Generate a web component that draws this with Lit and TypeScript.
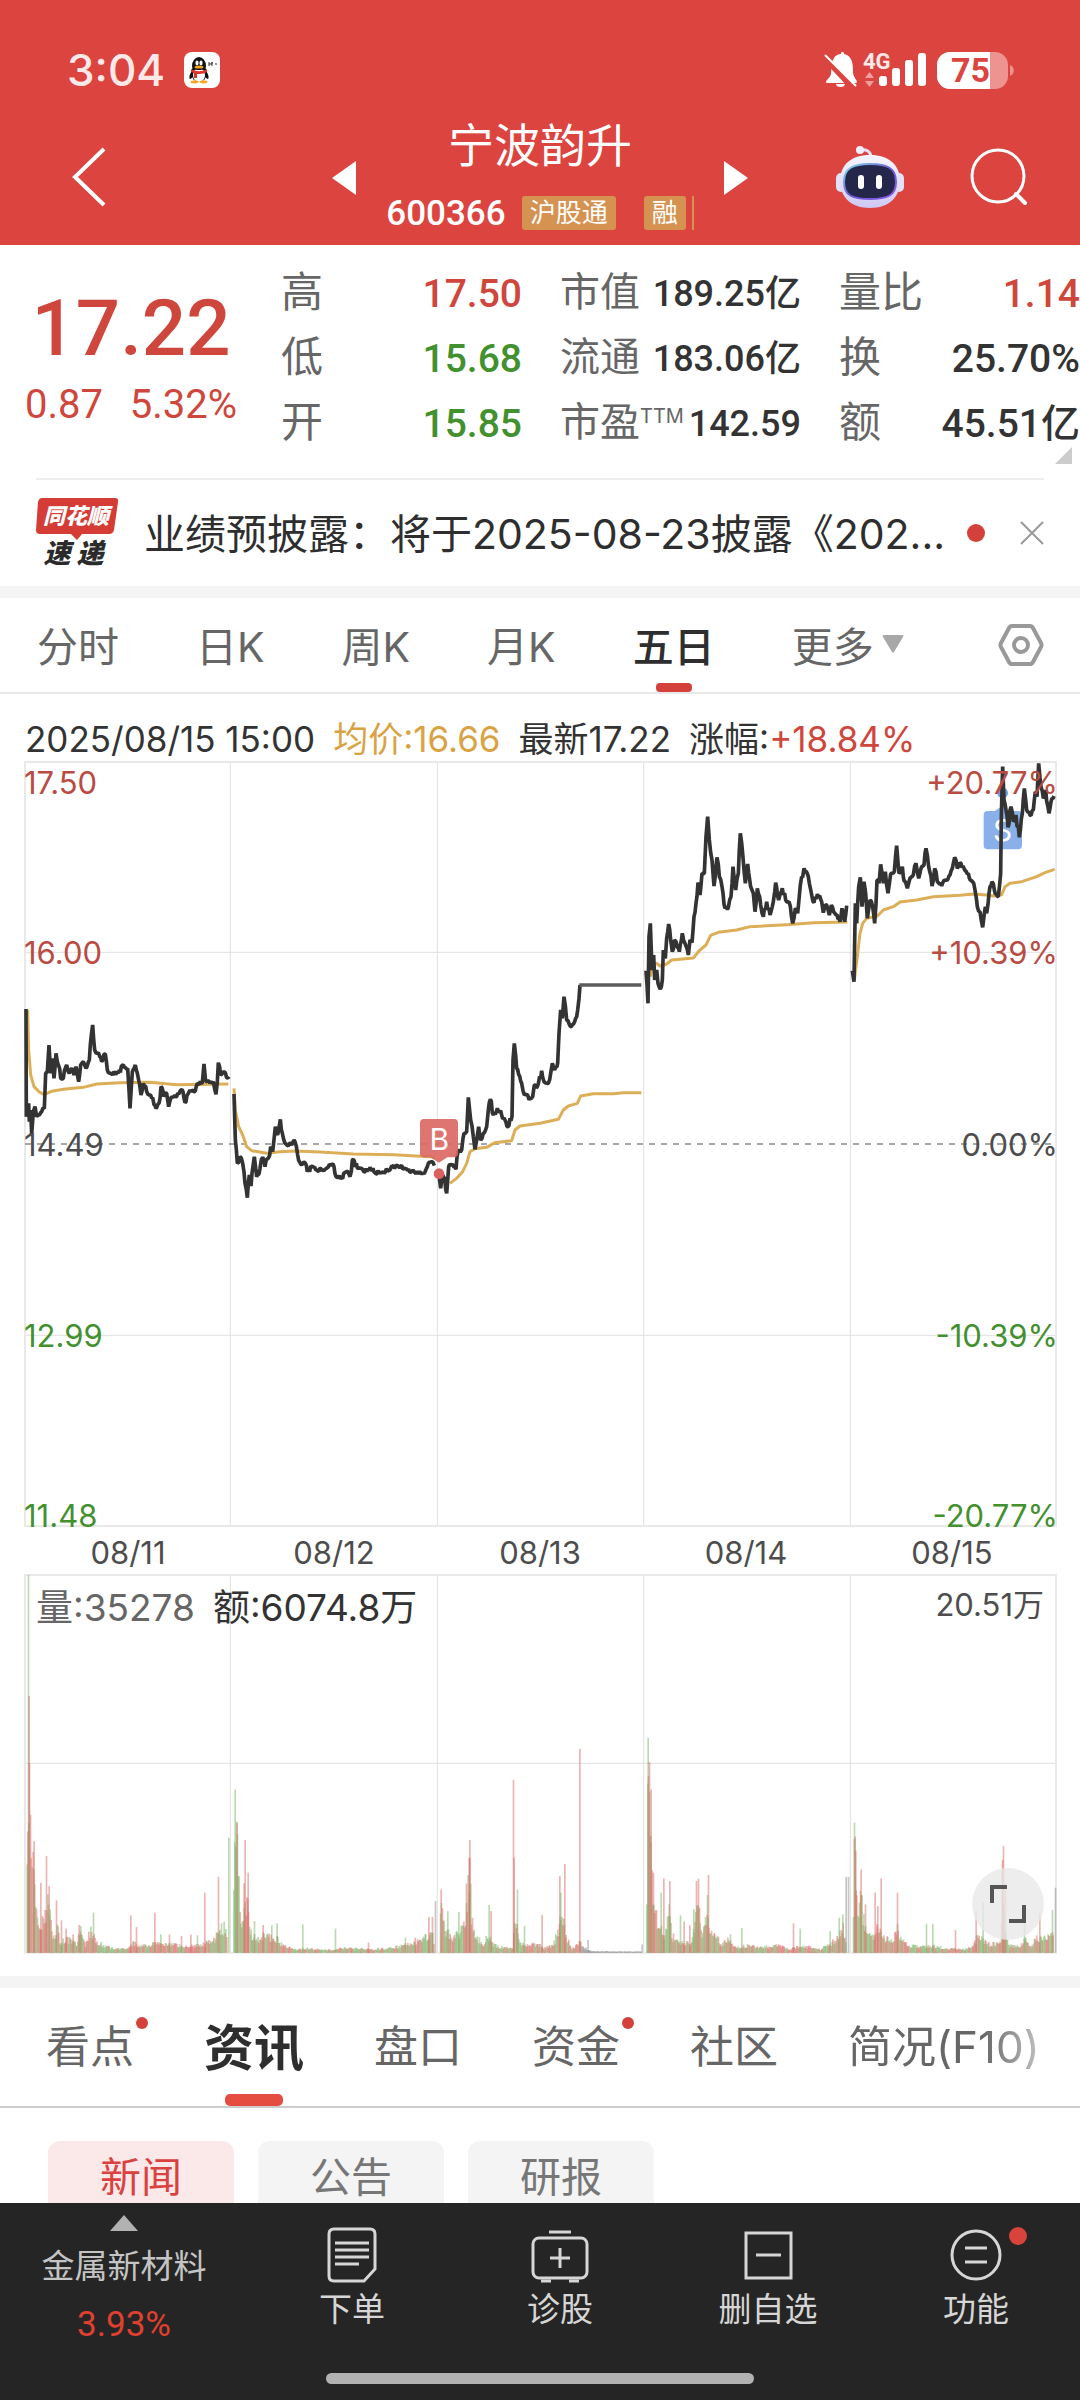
import { LitElement, html, svg, css } from "lit";
import { customElement, state } from "lit/decorators.js";

type Point = [number, number];

const pairs = (text: string, dx = 0): Point[] =>
  text
    .trim()
    .split(/\s+/)
    .map((item) => {
      const [x, y] = item.split(",").map(Number);
      return [x + dx, y] as Point;
    });

/* Deterministic generator, so that the fill between samples is the same on every draw. */
const noise = (seed: number) => {
  let value = seed;
  return () => {
    value = (value * 1664525 + 1013904223) % 4294967296;
    return value / 4294967296;
  };
};

const PRICE: Point[][] = [
  pairs(`78,777 79,1100 86,1060 88,1115 92,1080 95,1152 100,1085 105,1070 110,1100 118,1095 125,1085 133,1075 137,970
    142,965 147,885 152,970 157,925 162,985 168,910 175,945 182,985 190,985 200,945 208,970 215,955 222,975 228,950
    236,995 242,945 250,935 258,955 268,930 274,855 278,825 284,900 292,910 305,935 316,912 322,960 335,970 355,970
    370,945 383,955 390,1075 397,965 406,945 415,985 423,1035 430,1000 440,1025 448,1035 455,1045 468,1075 477,1060
    483,1010 492,1040 500,1030 506,1070 515,1040 530,1040 543,1020 558,1055 570,1020 582,1025 592,1000 607,998
    612,942 617,995 640,995 648,1033 655,938 662,975 672,965 680,983 687,980`),
  pairs(`702,1032 706,1170 712,1240 720,1220 728,1240 735,1300 742,1343 748,1275 753,1308 763,1220 770,1280 780,1255
    788,1222 795,1250 805,1225 812,1190 818,1205 826,1130 833,1155 841,1108 847,1150 855,1180 865,1188 885,1175
    893,1215 905,1245 915,1238 922,1265 935,1250 950,1260 975,1258 988,1243 1002,1250 1008,1280 1025,1283 1040,1265
    1050,1280 1057,1230 1075,1255 1095,1265 1110,1252 1125,1268 1150,1265 1172,1255 1190,1247 1220,1257 1245,1268
    1272,1272 1285,1240 1295,1235 1303,1247`),
  pairs(`1317,1275 1322,1315 1328,1275 1334,1285 1340,1330 1346,1250 1355,1245 1368,1258 1374,1205 1385,1200 1392,1150
    1400,1145 1405,1042 1412,1110 1420,1160 1425,1198 1436,1130 1442,1170 1450,1150 1460,1130 1465,1080 1471,1048
    1480,1095 1492,1075 1505,1095 1515,1110 1524,1130 1536,1100 1539,930 1543,880 1550,955 1565,1000 1573,1035
    1590,1045 1598,1040 1603,1005 1612,1010 1625,962 1635,998 1645,1000 1652,970 1657,940 1664,960 1673,940
    1677,850 1682,780 1687,805 1692,740 1700,810 1714,830 1724,815 1733,780 1740,705`),
  pairs(
    `18,662 24,760 27,560 31,520 36,660 41,615 44,690 50,660 54,700 61,717 67,690 70,600 76,625 80,565 86,522 92,570
    97,605 103,570 108,575 118,605 127,550 135,580 145,615 150,570 156,578 162,500 168,460 174,398 180,435 186,370
    193,370 198,260 203,200 208,270 216,330 222,408 231,322 238,380 246,410 255,475 265,472 273,440 279,350 287,420
    295,370 301,250 308,310 316,400 323,342 332,410 340,430 345,485 352,415 362,465 370,500 380,455 390,495 400,455
    407,398 416,450 427,415 437,450 447,455 458,520 466,475 473,490 481,405 492,355 505,380 515,435 522,458 532,432
    545,455 550,488 560,465 568,495 574,465 585,490 600,515 606,475 614,515 620,467`,
    1920,
  ),
  pairs(
    `637,662 642,695 646,460 650,520 656,410 661,382 666,470 672,395 677,430 682,505 690,450 698,470 704,520 711,390
    717,400 722,343 730,400 736,365 744,430 752,372 763,365 770,287 777,370 787,350 793,395 802,415 810,385 820,375
    828,340 836,385 845,350 852,345 858,295 866,350 876,408 884,355 892,395 905,408 918,390 930,375 940,340 944,322
    952,355 960,338 972,355 985,370 997,395 1005,420 1012,470 1020,485 1028,532 1036,470 1040,490 1047,430 1056,395
    1063,420 1075,440 1082,370 1084,200 1088,50 1092,150 1098,180 1104,232 1113,170 1120,215 1128,195 1138,262
    1147,190 1153,115 1160,180 1170,195 1180,180 1186,125 1191,140 1196,40 1203,110 1210,145 1217,120 1227,190
    1233,155 1242,138`,
    1920,
  ),
];

const AVERAGE: Point[][] = [
  pairs(`83,780 86,900 92,975 102,1010 118,1026 132,1034 155,1024 190,1018 250,1012 290,1002 360,998 450,997 530,1004 685,1002`),
  pairs(`702,1015 706,1080 716,1130 728,1155 740,1190 755,1202 800,1210 840,1205 885,1203 960,1206 1060,1212 1180,1214 1290,1220 1305,1224`),
  pairs(`1350,1300 1370,1285 1388,1265 1400,1240 1410,1205 1425,1196 1460,1192 1485,1178 1535,1172 1545,1140 1560,1128
    1620,1120 1675,1108 1690,1080 1705,1068 1732,1060 1742,1038 1780,1031 1840,1031 1870,1028 1924,1028`),
  pairs(`31,680 36,645 50,640 60,648 80,642 95,630 160,624 180,600 198,585 212,556 235,547 290,540 330,530 440,524 520,518 622,516`, 1920),
  pairs(`643,690 652,620 660,550 668,520 680,505 712,498 730,480 760,470 780,456 830,450 880,440 960,436 1000,432 1040,435
    1060,438 1085,434 1095,410 1110,400 1145,395 1190,380 1215,368 1244,358`, 1920),
];

interface VolumeDay {
  level: Point[];
  spikes: Point[];
  opening: "up" | "down";
  calmFrom?: number;
}

const VOLUME: VolumeDay[] = [
  {
    opening: "down",
    level: pairs(`76,450 85,760 88,460 92,370 97,240 102,220 108,150 115,110 125,110 135,180 145,160 152,60 165,90 172,35
      190,50 210,40 220,25 230,80 245,25 262,90 275,40 300,25 340,12 370,15 385,35 400,25 440,30 480,35 520,25 560,25
      590,30 620,50 650,100 655,110 658,15`),
    spikes: pairs(`80,1133 82,770 97,335 116,210 133,290 140,200 162,157 176,97 190,72 210,55 227,83 232,80 269,120 377,112
      394,77 447,120 465,55 490,54 525,50 552,54 571,52 592,180 632,228 662,345`),
  },
  {
    opening: "down",
    level: pairs(`677,190 680,490 684,400 690,300 697,130 703,110 712,180 718,150 725,70 745,50 765,60 800,50 825,25 850,12
      900,15 950,10 1010,18 1060,12 1120,15 1170,25 1210,40 1240,60 1255,80 1258,10`),
    spikes: pairs(`680,490 686,390 709,338 718,240 707,208 737,95 762,83 787,82 802,88 877,85 972,72 1068,30 1175,45
      1203,45 1243,107 1253,107 1262,155`),
  },
  {
    opening: "up",
    level: pairs(`1277,130 1280,190 1290,70 1300,80 1310,45 1330,75 1345,90 1355,200 1362,300 1368,110 1380,60 1400,30
      1415,60 1430,30 1445,20 1485,15 1488,20 1492,160 1502,80 1510,30 1530,30 1568,30 1578,15 1605,30 1620,80
      1628,150 1640,60 1660,15 1675,30 1681,40 1690,20 1705,12 1720,5 1860,4`),
    spikes: pairs(`1279,190 1298,125 1330,122 1352,208 1360,285 1362,338 1418,143 1424,125 1489,518 1491,285 1500,190
      1521,80 1572,113 1623,230 1626,180 1638,266 1681,612 1705,38 1862,25`),
    calmFrom: 1686,
  },
  {
    opening: "down",
    level: pairs(`1876,180 1879,640 1884,520 1890,280 1898,200 1905,110 1918,80 1930,60 1940,150 1950,60 1970,35 2005,35
      2012,80 2022,200 2035,70 2052,150 2060,80 2080,60 2090,30 2110,45 2130,20 2170,25 2210,20 2260,25 2290,12
      2310,20 2350,20 2380,12 2400,25 2430,50 2445,90 2452,60 2455,10`),
    spikes: pairs(`1880,644 1884,572 1888,490 1895,240 1917,180 1925,223 1943,215 1974,112 1984,93 2001,82 2012,130
      2020,215 2026,222 2052,173 2055,233 2119,55 2152,74 2302,88 2321,72 2408,65 2434,105 2445,115 2455,227 2461,227`),
  },
  {
    opening: "down",
    level: pairs(`2476,150 2479,390 2484,300 2490,150 2497,220 2505,120 2520,60 2535,50 2545,120 2552,80 2560,60 2590,35
      2603,100 2612,50 2640,25 2680,20 2710,25 2740,15 2790,12 2820,20 2835,60 2850,50 2870,30 2905,35 2909,280
      2915,80 2925,30 2960,20 2975,50 2990,20 3005,50 3020,50 3050,60 3056,60`),
    spikes: pairs(`2479,390 2483,306 2498,250 2511,145 2539,180 2547,140 2556,223 2604,180 2688,86 2706,86 2772,68
      2832,125 2852,152 2909,278 2911,320 2917,210 2972,90 3017,118 3054,128 3062,195`),
  },
];

const toPath = (points: Point[]) => "M" + points.map(([x, y]) => `${x} ${y}`).join("L");

/* Adds small ticks between the sampled prices. */
const withTicks = (points: Point[], seed: number): Point[] => {
  const random = noise(seed);
  const out: Point[] = [];
  points.forEach((point, i) => {
    if (i > 0) {
      const [px, py] = points[i - 1];
      const steps = Math.floor((point[0] - px) / 3);
      for (let s = 1; s < steps; s++) {
        const k = s / steps;
        const swing = Math.min(11, 5 + Math.abs(point[1] - py) / 6);
        out.push([Math.round(px + (point[0] - px) * k), Math.round(py + (point[1] - py) * k + (random() * 2 - 1) * swing)]);
      }
    }
    out.push(point);
  });
  return out;
};

const levelAt = (points: Point[], x: number) => {
  for (let i = 1; i < points.length; i++) {
    if (x <= points[i][0]) {
      const [ax, ay] = points[i - 1];
      const [bx, by] = points[i];
      return ay + ((by - ay) * (x - ax)) / (bx - ax || 1);
    }
  }
  return 0;
};

const volumeBars = () =>
  VOLUME.map((day, d) => {
    const random = noise(97 + d * 31);
    const first = day.level[0][0];
    const last = day.level[day.level.length - 1][0];
    const bars: { x: number; h: number; c: string }[] = [];
    let rising = true;
    for (let x = first; x <= last; x += 2.5) {
      if (random() < 0.45) rising = !rising;
      const h = levelAt(day.level, x) * (0.55 + random() * 0.5);
      const c = day.calmFrom && x > day.calmFrom ? "flat" : rising ? "up" : "down";
      bars.push({ x, h, c });
    }
    day.spikes.forEach(([x, h], i) => {
      let c = random() < 0.6 ? "up" : "down";
      if (h >= 200) c = "up";
      if (i === 0) c = day.opening;
      if (x >= last - 1 || (day.calmFrom && x > day.calmFrom)) c = d === 0 ? "down" : "flat";
      bars.push({ x, h, c });
    });
    return bars.map(
      (b) => svg`<rect class=${b.c} x=${Math.round((b.x * 3240) / 3136)} y=${Math.round(1133 - b.h)} width="5" height=${Math.ceil(b.h)}></rect>`,
    );
  });

const QUOTES = [
  [
    { label: "高", value: "17.50", tone: "rise" },
    { label: "低", value: "15.68", tone: "fall" },
    { label: "开", value: "15.85", tone: "fall" },
  ],
  [
    { label: "市值", value: "189.25亿", tone: "" },
    { label: "流通", value: "183.06亿", tone: "" },
    { label: "市盈", note: "TTM", value: "142.59", tone: "" },
  ],
  [
    { label: "量比", value: "1.14", tone: "rise" },
    { label: "换", value: "25.70%", tone: "" },
    { label: "额", value: "45.51亿", tone: "" },
  ],
];

const PERIODS = ["分时", "日K", "周K", "月K", "五日"];
const SECTIONS = [
  { name: "看点", dot: true },
  { name: "资讯" },
  { name: "盘口" },
  { name: "资金", dot: true },
  { name: "社区" },
  { name: "简况(F10)", fade: true },
];
const FILTERS = ["新闻", "公告", "研报"];
const DAYS = ["08/11", "08/12", "08/13", "08/14", "08/15"];
const COLUMN_LINES = [691, 1312, 1931, 2551];

const base = css`
  :host {
    display: block;
  }
  * {
    box-sizing: border-box;
  }
  button,
  a {
    font: inherit;
    color: inherit;
    background: none;
    border: 0;
    padding: 0;
    margin: 0;
    text-decoration: none;
    cursor: pointer;
  }
  svg {
    display: block;
    overflow: visible;
  }
  .rise {
    color: #cf463d;
  }
  .fall {
    color: #43902f;
  }
`;

@customElement("stock-header")
export class StockHeader extends LitElement {
  static styles = [
    base,
    css`
      :host {
        background: #dc443f;
        color: #fff;
      }
      .status {
        display: flex;
        align-items: center;
        height: 115px;
        padding: 24px 64px 0 67px;
        gap: 19px;
      }
      .clock {
        font-size: 44px;
        line-height: 48px;
        font-weight: 500;
        color: #ffe9e8;
      }
      .signals {
        margin-left: auto;
      }
      .nav {
        display: grid;
        grid-template-columns: 1fr auto 1fr;
        align-items: center;
        height: 130px;
        padding-bottom: 8px;
      }
      .back {
        justify-self: start;
        margin-left: 68px;
      }
      .stock {
        display: flex;
        align-items: center;
      }
      .names {
        display: flex;
        flex-direction: column;
        align-items: center;
        gap: 10px;
        width: 368px;
      }
      h1 {
        margin: 0;
        font-size: 46px;
        line-height: 60px;
        font-weight: 400;
      }
      .codes {
        display: flex;
        align-items: center;
        height: 56px;
      }
      .code {
        font-family: Roboto, sans-serif;
        font-weight: 500;
        font-size: 35px;
        margin-right: 16px;
      }
      .tag {
        background: #d69250;
        font-size: 26px;
        line-height: 34px;
        padding: 0 8px;
        border-radius: 3px;
      }
      .tag + .tag {
        margin-left: 28px;
      }
      .sliver {
        width: 2px;
        height: 34px;
        margin-left: 6px;
        background: #d69250;
      }
      .actions {
        display: flex;
        align-items: center;
        justify-content: flex-end;
        gap: 64px;
        padding-right: 51px;
      }
    `,
  ];

  render() {
    return html`
      <div class="status">
        <span class="clock">3:04</span>
        <svg width="36" height="36" viewBox="0 0 36 36" aria-hidden="true">
          <rect width="36" height="36" rx="8" fill="#fff"></rect>
          <path d="M8 19c-3 4-3 7-2 8 1 0 2-1 3-3zM22 19c3 4 3 7 2 8-1 0-2-1-3-3z" fill="#111"></path>
          <ellipse cx="15" cy="21" rx="8" ry="9" fill="#111"></ellipse>
          <ellipse cx="15" cy="23" rx="6" ry="7" fill="#fff"></ellipse>
          <path d="M8 14a7 9 0 0 1 14 0c0 3-3 4-7 4s-7-1-7-4z" fill="#111"></path>
          <ellipse cx="13" cy="11" rx="1.6" ry="2.4" fill="#fff"></ellipse>
          <ellipse cx="17" cy="11" rx="1.6" ry="2.4" fill="#fff"></ellipse>
          <ellipse cx="15" cy="15" rx="4.5" ry="1.6" fill="#f5a623"></ellipse>
          <path d="M7 17c5 3 11 3 16 0v3c-2 1-5 2-7 2h-3v4h-3v-5c-1 0-2-1-3-1z" fill="#e0352b"></path>
          <ellipse cx="10.5" cy="30" rx="4" ry="1.4" fill="#f5a623"></ellipse>
          <ellipse cx="19.5" cy="30" rx="4" ry="1.4" fill="#f5a623"></ellipse>
          <path d="M25 10v4M25 12h3v-2v4M31 12h2" stroke="#333" stroke-width="1" fill="none"></path>
        </svg>
        <svg class="signals" width="194" height="44" viewBox="822 47 194 44" role="img" aria-label="静音 4G 电量75">
          <path d="M826 81c0-2 4-4 5-8 1-9 0-19 10-20 0-3 3-3 3 0 9 2 9 11 9 19 1 5 4 7 4 9 0 1-1 1-2 1h-27c-1 0-2 0-2-1z" fill="#fff"></path>
          <path d="M836 83h9c0 2-2 3-4.500 3s-4.500-1-4.500-3z" fill="#fff"></path>
          <path d="M825 57l28 30" stroke="#dc443f" stroke-width="6"></path>
          <path d="M825 54l31 31" stroke="#fff" stroke-width="2"></path>
          <text x="863" y="68" font-size="22" font-weight="700" font-family="Roboto" fill="#ffe9e8">4G</text>
          <path d="M865 77l4.500-6 4.500 6zM865 80l4.500 6 4.500-6z" fill="#f0a19f"></path>
          <rect x="879" y="75" width="8" height="10" rx="3" fill="#fff"></rect>
          <rect x="892" y="67" width="8" height="18" rx="3" fill="#fff"></rect>
          <rect x="905" y="59" width="8" height="26" rx="3" fill="#fff"></rect>
          <rect x="918" y="52" width="8" height="33" rx="3" fill="#fff"></rect>
          <rect x="937" y="51" width="71" height="37" rx="13" fill="#ee9490"></rect>
          <path d="M990 51v37h-40a13 13 0 0 1-13-13v-11a13 13 0 0 1 13-13z" fill="#fff"></path>
          <path d="M1010 64c5 2 5 9 0 11z" fill="#ee9490"></path>
          <text x="951" y="81" font-size="34" font-weight="700" font-family="Roboto" fill="#dc443f">75</text>
        </svg>
      </div>
      <div class="nav">
        <button class="back" aria-label="返回">
          <svg width="40" height="64" viewBox="0 0 40 64"><path d="M36 3L7 31l29 28" fill="none" stroke="#fff" stroke-width="4"></path></svg>
        </button>
        <div class="stock">
          <button aria-label="上一只"><svg width="24" height="34" viewBox="0 0 24 34"><path d="M24 0v34L0 17z" fill="#fff"></path></svg></button>
          <div class="names">
            <h1>宁波韵升</h1>
            <div class="codes">
              <span class="code">600366</span><span class="tag">沪股通</span><span class="tag">融</span><span class="sliver"></span>
            </div>
          </div>
          <button aria-label="下一只"><svg width="24" height="34" viewBox="0 0 24 34"><path d="M0 0v34l24-17z" fill="#fff"></path></svg></button>
        </div>
        <div class="actions">
          <button aria-label="智能助手">
            <svg width="70" height="64" viewBox="0 0 70 64">
              <defs>
                <linearGradient id="shell" x1="0" y1="0" x2="0" y2="1">
                  <stop offset="0" stop-color="#f8f6ff"></stop>
                  <stop offset="1" stop-color="#cfc9f3"></stop>
                </linearGradient>
                <linearGradient id="rim" x1="0" y1="0" x2="1" y2="1">
                  <stop offset="0" stop-color="#7fe3e6"></stop>
                  <stop offset=".5" stop-color="#6d57d8"></stop>
                  <stop offset="1" stop-color="#8a5be8"></stop>
                </linearGradient>
              </defs>
              <path d="M25 4c6-1 11 1 11 8" fill="none" stroke="#e6dff7" stroke-width="3"></path>
              <circle cx="25" cy="4" r="4" fill="#f1edfb"></circle>
              <rect x="1" y="27" width="10" height="19" rx="5" fill="#e4e0f8"></rect>
              <rect x="59" y="27" width="10" height="19" rx="5" fill="#e4e0f8"></rect>
              <path d="M35 9c19 0 30 10 30 26s-11 27-30 27S5 51 5 35 16 9 35 9z" fill="url(#shell)"></path>
              <path d="M35 18c17 0 26 4 26 18s-9 17-26 17S9 50 9 36s9-18 26-18z" fill="#25274a" stroke="url(#rim)" stroke-width="2"></path>
              <rect x="23" y="29" width="6" height="14" rx="3" fill="#fff"></rect>
              <rect x="41" y="29" width="6" height="14" rx="3" fill="#fff"></rect>
            </svg>
          </button>
          <button aria-label="搜索">
            <svg width="60" height="60" viewBox="0 0 60 60">
              <circle cx="29" cy="28" r="26" fill="none" stroke="#fff" stroke-width="3"></circle>
              <path d="M47 46l9 9" stroke="#fff" stroke-width="4" stroke-linecap="round"></path>
            </svg>
          </button>
        </div>
      </div>
    `;
  }
}

@customElement("stock-quote")
export class StockQuote extends LitElement {
  static styles = [
    base,
    css`
      .quote {
        position: relative;
        display: flex;
        gap: 44px;
        padding: 14px 0 24px 25px;
        color: #333;
      }
      .last {
        width: 212px;
        flex: none;
        text-align: center;
        font-family: Roboto, sans-serif;
      }
      .price {
        font-size: 78px;
        line-height: 104px;
        padding-top: 18px;
        font-weight: 500;
      }
      .change {
        display: flex;
        justify-content: space-between;
        font-size: 40px;
        line-height: 48px;
      }
      .figures {
        flex: 1;
        display: grid;
        grid-template-columns: repeat(3, 1fr);
        gap: 38px;
        margin: 0;
      }
      .pair {
        display: flex;
        justify-content: space-between;
        align-items: center;
        height: 65px;
        white-space: nowrap;
      }
      dt {
        color: #666;
        font-size: 42px;
        line-height: 60px;
      }
      sup {
        font-size: 20px;
        line-height: 0;
        vertical-align: 13px;
      }
      dd {
        margin: 0;
        padding-top: 4px;
        font-family: Roboto, "Noto Sans CJK SC", sans-serif;
        font-size: 39px;
        line-height: 60px;
        font-weight: 500;
      }
      .middle dt {
        font-size: 40px;
      }
      .middle dd {
        font-size: 36px;
      }
      .corner {
        position: absolute;
        right: 8px;
        bottom: 14px;
      }
      .news {
        display: flex;
        align-items: center;
        height: 108px;
        margin: 0 36px;
        border-top: 2px solid #eee;
      }
      .headline {
        flex: 1;
        margin-left: 26px;
        padding-bottom: 4px;
        font-size: 41px;
        color: #2e2e2e;
        white-space: nowrap;
        overflow: hidden;
        text-overflow: ellipsis;
      }
      .dot {
        width: 18px;
        height: 18px;
        margin: 0 35px 0 10px;
        border-radius: 50%;
        background: #d3413a;
      }
    `,
  ];

  render() {
    return html`
      <section class="quote">
        <div class="last rise">
          <div class="price">17.22</div>
          <div class="change"><span>0.87</span><span>5.32%</span></div>
        </div>
        <dl class="figures">
          ${QUOTES.map(
            (column, i) => html`<div class=${i === 1 ? "middle" : ""}>
              ${column.map(
                (item) => html`<div class="pair">
                  <dt>${item.label}${"note" in item ? html`<sup>${item.note}</sup>` : ""}</dt>
                  <dd class=${item.tone}>${item.value}</dd>
                </div>`,
              )}
            </div>`,
          )}
        </dl>
        <svg class="corner" width="17" height="17" viewBox="0 0 17 17" aria-hidden="true"><path d="M17 0v17H0z" fill="#ccc"></path></svg>
      </section>
      <section class="news">
        <svg width="82" height="70" viewBox="0 0 82 70" role="img" aria-label="同花顺速递">
          <path d="M6 0h73q4 0 3 4l-4 28q-1 4-5 4H46l-5 6-6-6H4q-4 0-4-4L2 4q1-4 4-4z" fill="#d53c36"></path>
          <text x="40" y="26" text-anchor="middle" font-size="22" font-weight="900" font-style="italic" fill="#fff">同花顺</text>
          <text x="21" y="65" text-anchor="middle" font-size="27" font-weight="900" font-style="italic" fill="#2b2b2b">速</text>
          <text x="54" y="65" text-anchor="middle" font-size="27" font-weight="900" font-style="italic" fill="#2b2b2b">递</text>
        </svg>
        <a class="headline" href="#news">业绩预披露：将于2025-08-23披露《202...</a>
        <span class="dot"></span>
        <button aria-label="关闭">
          <svg width="24" height="24" viewBox="0 0 24 24"><path d="M1 1l22 22M23 1L1 23" stroke="#999" stroke-width="2"></path></svg>
        </button>
      </section>
    `;
  }
}

@customElement("stock-chart")
export class StockChart extends LitElement {
  @state() private period = "五日";

  static styles = [
    base,
    css`
      :host {
        border-top: 12px solid #f4f4f4;
        border-bottom: 12px solid #f4f4f4;
        padding-bottom: 22px;
      }
      .periods {
        display: flex;
        gap: 77px;
        height: 96px;
        padding: 0 36px 0 37px;
        border-bottom: 2px solid #e8e8e8;
        font-size: 41px;
        color: #666;
      }
      .period {
        position: relative;
        padding-bottom: 2px;
      }
      .on {
        color: #2e2e2e;
        font-weight: 500;
      }
      .on::after {
        content: "";
        position: absolute;
        left: 50%;
        bottom: 0;
        width: 36px;
        height: 9px;
        margin-left: -18px;
        border-radius: 4px;
        background: #d3413a;
      }
      .more {
        display: flex;
        align-items: center;
        gap: 8px;
        padding-bottom: 2px;
      }
      .settings {
        margin-left: auto;
      }
      .readout {
        display: flex;
        gap: 18px;
        padding: 24px 25px 0;
        font-size: 35px;
        line-height: 42px;
        white-space: nowrap;
        color: #333;
      }
      .avg {
        color: #d9a344;
      }
      .plot {
        position: relative;
      }
      .plot > svg {
        width: 100%;
        height: auto;
      }
      .grid {
        fill: none;
        stroke: #e0e0e0;
        stroke-width: 3;
      }
      .frame {
        fill: none;
        stroke: #e9e9e9;
        stroke-width: 6;
      }
      .zero {
        stroke: #8a8a8a;
        stroke-width: 5;
        stroke-dasharray: 18 18;
      }
      .price {
        fill: none;
        stroke: #333;
        stroke-width: 11;
        stroke-linejoin: bevel;
      }
      .halt {
        stroke: #5c5c5c;
        stroke-width: 11;
      }
      .average {
        fill: none;
        stroke: #ddae58;
        stroke-width: 9;
        stroke-linejoin: round;
      }
      .axis {
        font-size: 93px;
        fill: #4d4d4d;
      }
      .high {
        fill: #b94b43;
      }
      .low {
        fill: #43902f;
      }
      .end {
        text-anchor: end;
      }
      .flag {
        font-size: 90px;
        text-anchor: middle;
        fill: #fff;
      }
      .up {
        fill: #dc6a66;
        fill-opacity: 0.5;
      }
      .down {
        fill: #78b566;
        fill-opacity: 0.5;
      }
      .flat {
        fill: #8d8d8d;
        fill-opacity: 0.5;
      }
      .days {
        display: grid;
        grid-template-columns: repeat(5, 1fr);
        padding: 4px 25px 0;
        font-size: 31px;
        line-height: 42px;
        text-align: center;
        color: #4d4d4d;
      }
      .totals {
        position: absolute;
        top: 10px;
        left: 36px;
        display: flex;
        gap: 18px;
        font-size: 37px;
        line-height: 48px;
        color: #333;
      }
      .shares {
        color: #666;
      }
      .peak {
        position: absolute;
        top: 10px;
        right: 36px;
        font-size: 31px;
        line-height: 42px;
        color: #4d4d4d;
      }
      .expand {
        position: absolute;
        right: 36px;
        bottom: 14px;
        display: grid;
        place-items: center;
        width: 72px;
        height: 72px;
        border-radius: 50%;
        background: rgba(232, 232, 232, 0.8);
      }
    `,
  ];

  render() {
    return html`
      <nav class="periods">
        ${PERIODS.map(
          (name) => html`<button class="period ${name === this.period ? "on" : ""}" @click=${() => (this.period = name)}>${name}</button>`,
        )}
        <button class="more">
          更多<svg width="22" height="18" viewBox="0 0 22 18"><path d="M2 0h18q2 0 1 2L12 17q-1 1-2 0L1 2q-1-2 1-2z" fill="#a8a8a8"></path></svg>
        </button>
        <button class="settings" aria-label="设置">
          <svg width="46" height="46" viewBox="0 0 46 46">
            <path d="M14 4h18q2 0 3 2l8 15q1 2 0 4l-8 15q-1 2-3 2H14q-2 0-3-2L3 25q-1-2 0-4l8-15q1-2 3-2z" fill="none" stroke="#999" stroke-width="4"></path>
            <circle cx="23" cy="23" r="7" fill="none" stroke="#999" stroke-width="4"></circle>
          </svg>
        </button>
      </nav>
      <div class="readout">
        <span>2025/08/15 15:00</span><span class="avg">均价:16.66</span><span>最新17.22</span><span>涨幅:<span class="rise">+18.84%</span></span>
      </div>
      <div class="plot">
        <svg viewBox="0 30 3240 2304" role="img" aria-label="五日分时走势">
          <path class="grid" d="M75 607H3168M75 1756H3168 ${COLUMN_LINES.map((x) => `M${x} 36V2328`).join("")}"></path>
          <rect class="frame" x="75" y="36" width="3093" height="2292"></rect>
          <path class="zero" d="M75 1182H3168"></path>
          <path d="M2984 183l24-16 24 16h22q12 0 12 12v91q0 12-12 12h-91q-12 0-12-12v-91q0-12 12-12z" fill="#8ab0ea"></path>
          <circle cx="3008" cy="129" r="16" fill="#6f9cdc"></circle>
          <text class="flag" x="3008" y="273">S</text>
          ${AVERAGE.map((line) => svg`<path class="average" d=${toPath(line)}></path>`)}
          ${PRICE.map((line, i) => svg`<path class="price" d=${toPath(withTicks(line, 11 + i * 7))}></path>`)}
          <path class="halt" d="M1738 705H1924"></path>
          <circle cx="1317" cy="1271" r="16" fill="#d9605c"></circle>
          <path d="M1272 1107h90q12 0 12 12v91q0 12-12 12h-20l-25 16-25-16h-20q-12 0-12-12v-91q0-12 12-12z" fill="#db6661" fill-opacity=".9"></path>
          <text class="flag" x="1318" y="1199">B</text>
          <text class="axis high" x="72" y="131">17.50</text>
          <text class="axis high" x="72" y="641">16.00</text>
          <text class="axis" x="72" y="1217">14.49</text>
          <text class="axis low" x="72" y="1790">12.99</text>
          <text class="axis low" x="72" y="2332">11.48</text>
          <text class="axis high end" x="3174" y="131">+20.77%</text>
          <text class="axis high end" x="3174" y="641">+10.39%</text>
          <text class="axis end" x="3174" y="1217">0.00%</text>
          <text class="axis low end" x="3174" y="1790">-10.39%</text>
          <text class="axis low end" x="3174" y="2332">-20.77%</text>
        </svg>
      </div>
      <div class="days">${DAYS.map((day) => html`<span>${day}</span>`)}</div>
      <div class="plot">
        <svg viewBox="0 -3 3240 1140" role="img" aria-label="成交量">
          <path class="grid" d="M75 565H3168 ${COLUMN_LINES.map((x) => `M${x} 0V1133`).join("")}"></path>
          <rect class="frame" x="75" y="0" width="3093" height="1133"></rect>
          ${volumeBars()}
        </svg>
        <div class="totals"><span class="shares">量:35278</span><span>额:6074.8万</span></div>
        <div class="peak">20.51万</div>
        <button class="expand" aria-label="全屏">
          <svg width="38" height="38" viewBox="0 0 38 38"><path d="M3 18V2h15M20 36h15V20" fill="none" stroke="#555" stroke-width="4"></path></svg>
        </button>
      </div>
    `;
  }
}

@customElement("stock-sections")
export class StockSections extends LitElement {
  @state() private section = "资讯";
  @state() private filter = "新闻";

  static styles = [
    base,
    css`
      .tabs {
        display: flex;
        gap: 70px;
        height: 120px;
        padding: 0 46px;
        border-bottom: 2px solid #ccc;
        font-size: 44px;
        color: #666;
      }
      .tab {
        position: relative;
        padding-bottom: 6px;
        white-space: nowrap;
      }
      .on {
        font-size: 50px;
        font-weight: 700;
        color: #2e2e2e;
      }
      .on::after {
        content: "";
        position: absolute;
        left: 50%;
        bottom: 0;
        width: 58px;
        height: 12px;
        margin-left: -29px;
        border-radius: 5px;
        background: #e54d41;
      }
      .dot {
        position: absolute;
        top: 29px;
        right: -14px;
        width: 12px;
        height: 12px;
        border-radius: 50%;
        background: #d3413a;
      }
      .fade {
        mask-image: linear-gradient(90deg, #000 70%, rgba(0, 0, 0, 0.4));
      }
      .filters {
        display: flex;
        gap: 24px;
        padding: 33px 48px;
      }
      .filter {
        width: 186px;
        height: 78px;
        padding-bottom: 6px;
        border-radius: 12px;
        background: #f4f4f4;
        font-size: 41px;
        line-height: 60px;
        color: #777;
      }
      .chosen {
        background: #fbe9ea;
        color: #d9423f;
      }
    `,
  ];

  render() {
    return html`
      <nav class="tabs">
        ${SECTIONS.map(
          (tab) => html`<button
            class="tab ${tab.name === this.section ? "on" : ""} ${tab.fade ? "fade" : ""}"
            @click=${() => (this.section = tab.name)}
          >
            ${tab.name}${tab.dot ? html`<span class="dot"></span>` : ""}
          </button>`,
        )}
      </nav>
      <div class="filters">
        ${FILTERS.map(
          (name) => html`<button class="filter ${name === this.filter ? "chosen" : ""}" @click=${() => (this.filter = name)}>${name}</button>`,
        )}
      </div>
    `;
  }
}

@customElement("stock-toolbar")
export class StockToolbar extends LitElement {
  static styles = [
    base,
    css`
      :host {
        background: #252525;
        color: #d6d6d6;
        font-size: 33px;
      }
      .bar {
        display: flex;
        height: 170px;
      }
      .sector {
        display: flex;
        flex-direction: column;
        align-items: center;
        width: 248px;
        padding-top: 12px;
        color: #c4c4c4;
      }
      .sector-name {
        line-height: 48px;
        margin-top: 11px;
      }
      .sector-change {
        margin-top: 11px;
        line-height: 48px;
        font-family: Roboto, sans-serif;
        font-size: 35px;
        color: #e0402f;
      }
      .item {
        flex: 1;
        display: flex;
        flex-direction: column;
        align-items: center;
        padding-top: 24px;
      }
      .label {
        line-height: 48px;
        margin-top: 2px;
      }
      .icon {
        position: relative;
      }
      .dot {
        position: absolute;
        top: 0;
        right: -23px;
        width: 18px;
        height: 18px;
        border-radius: 50%;
        background: #d8433b;
      }
      .home {
        width: 428px;
        height: 11px;
        margin: 0 auto;
        border-radius: 6px;
        background: #b2b2b2;
      }
      .foot {
        height: 16px;
      }
      path,
      rect,
      circle {
        fill: none;
        stroke: #d6d6d6;
        stroke-width: 3;
      }
      .arrow {
        fill: #b2b2b2;
        stroke: none;
      }
    `,
  ];

  render() {
    return html`
      <nav class="bar">
        <button class="sector">
          <svg width="28" height="16" viewBox="0 0 28 16"><path class="arrow" d="M14 0l14 16H0z"></path></svg>
          <span class="sector-name">金属新材料</span>
          <span class="sector-change">3.93%</span>
        </button>
        <button class="item">
          <svg width="56" height="56" viewBox="0 0 56 56">
            <path d="M10 2h36q5 0 5 5v35l-11 12H10q-5 0-5-5V7q0-5 5-5z"></path>
            <path d="M11 16h34M11 23h34M11 30h34M11 37h24"></path>
          </svg>
          <span class="label">下单</span>
        </button>
        <button class="item">
          <svg width="60" height="56" viewBox="0 0 60 56">
            <rect x="3" y="11" width="54" height="40" rx="6"></rect>
            <path d="M19 5h22M30 21v20M20 31h20M11 54h10M39 54h10"></path>
          </svg>
          <span class="label">诊股</span>
        </button>
        <button class="item">
          <svg width="56" height="56" viewBox="0 0 56 56">
            <rect x="6" y="6" width="45" height="45"></rect>
            <path d="M16 28h25"></path>
          </svg>
          <span class="label">删自选</span>
        </button>
        <button class="item">
          <span class="icon">
            <svg width="56" height="56" viewBox="0 0 56 56">
              <circle cx="28" cy="28" r="24"></circle>
              <path d="M17 21h22M17 35h22"></path>
            </svg>
            <span class="dot"></span>
          </span>
          <span class="label">功能</span>
        </button>
      </nav>
      <div class="home"></div>
      <div class="foot"></div>
    `;
  }
}

@customElement("app-root")
export class AppRoot extends LitElement {
  static styles = css`
    :host {
      display: flex;
      flex-direction: column;
      height: 100vh;
      overflow: hidden;
      background: #fff;
      font-family: Inter, "Noto Sans CJK SC", sans-serif;
      line-height: normal;
    }
    .content {
      flex: 1;
      min-height: 0;
      overflow: hidden;
    }
    .bottom {
      flex: none;
    }
  `;

  render() {
    return html`
      <stock-header></stock-header>
      <main class="content">
        <stock-quote></stock-quote>
        <stock-chart></stock-chart>
        <stock-sections></stock-sections>
      </main>
      <stock-toolbar class="bottom"></stock-toolbar>
    `;
  }
}
